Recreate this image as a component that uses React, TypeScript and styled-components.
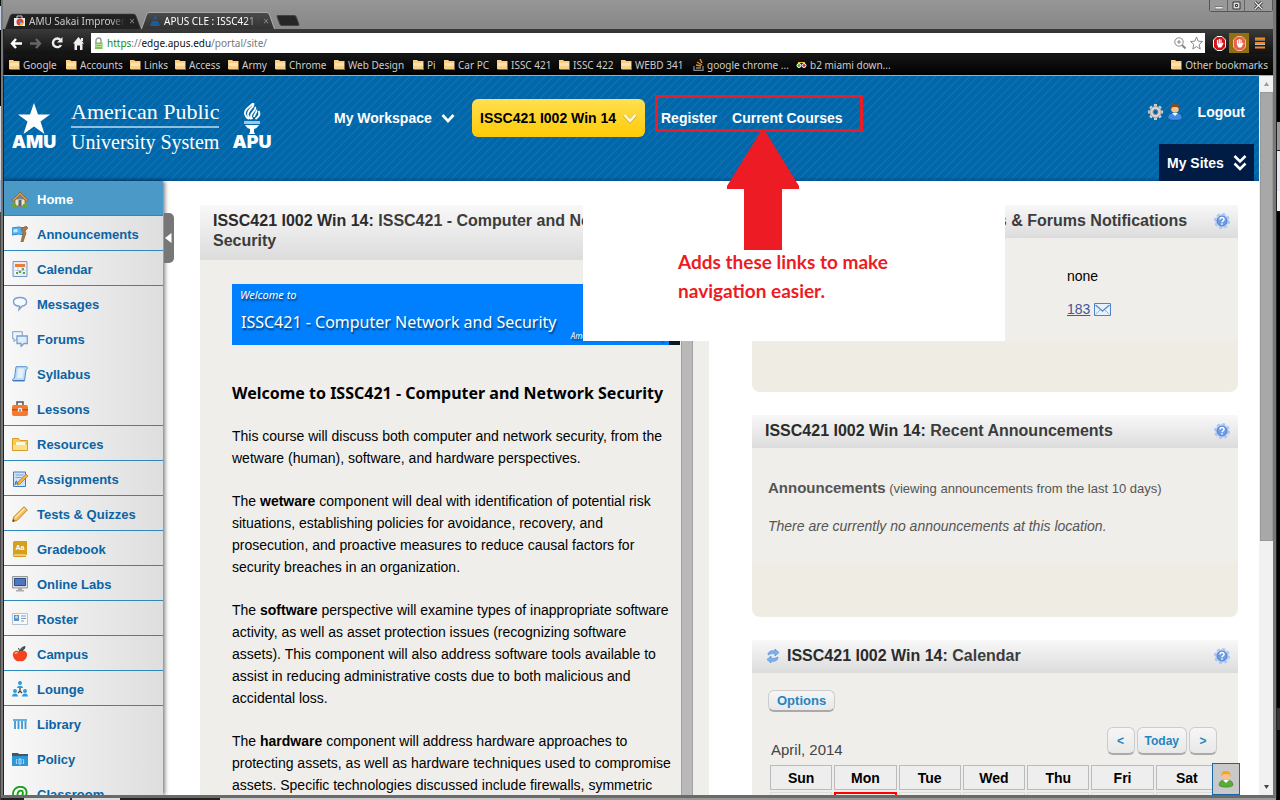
import React from "react";
import styled, { createGlobalStyle } from "styled-components";

const sans = `"Liberation Sans", Arial, sans-serif`;
const ui = `"Noto Sans", Tahoma, sans-serif`;
const serif = `"Liberation Serif", "Times New Roman", serif`;

const GlobalStyle = createGlobalStyle`
  * { box-sizing: border-box; }
  body { margin: 0; font-family: ${sans}; font-size: 14px; color: #000; background: #000; }
  a { color: inherit; text-decoration: none; }
  button { font: inherit; cursor: pointer; margin: 0; }
  p, h1, h2, h3 { margin: 0; }
  svg { display: block; flex: none; }
`;

/* ---------- desktop and browser window ---------- */

const Desktop = styled.div`
  height: 100vh;
  overflow: hidden;
  display: flex;
  padding: 0 4px 2px 1px;
  background:
    linear-gradient(#000 0 122px, #9c9c9c 122px 150px, #222 150px 151px, #e4e6f4 151px 191px, #f4f3f0 191px 211px, #000 211px 708px, #333 708px 730px, #000 730px) right / 4px 100% no-repeat,
    linear-gradient(#111 0 6px, #c8d4e6 6px 30px, #000 30px 106px, #ddd 106px 180px, #9db9dd 180px 212px, #444 212px) left / 1px 100% no-repeat,
    linear-gradient(90deg, #222 0 24px, #ddd 24px 70px, #333 70px 72px, #ddd 72px 120px, #222 120px 220px, #ccc 220px 560px, #999 560px) bottom / 100% 2px no-repeat;
`;

const Window = styled.div`
  flex: 1;
  min-width: 0;
  display: flex;
  flex-direction: column;
  border: solid #777;
  border-width: 0 3px 3px 2px;
  border-bottom-color: #6a6a6a;
  box-shadow: 1px 0 0 #222;
`;

const TitleBar = styled.div`
  height: 29px;
  flex: none;
  display: flex;
  align-items: flex-end;
  padding-left: 2px;
  background: linear-gradient(#969696, #878787);
  font: 10px/16px ${ui};
`;

const Tab = styled.div<{ $active?: boolean; $width: number }>`
  position: relative;
  width: ${p => p.$width}px;
  height: ${p => (p.$active ? 19 : 17)}px;
  padding-top: ${p => (p.$active ? 2 : 0)}px;
  color: ${p => (p.$active ? "#fff" : "#ccc")};
  z-index: ${p => (p.$active ? 1 : 0)};
  &::before {
    content: "";
    position: absolute;
    inset: 0;
    background: ${p => (p.$active ? "linear-gradient(#4a4a4a, #333)" : "#212121")};
    border: 1px solid ${p => (p.$active ? "#aaa" : "#333")};
    border-bottom: 0;
    border-radius: 3px 3px 0 0;
    transform: perspective(40px) rotateX(12deg);
    transform-origin: bottom;
  }
`;

const TabInner = styled.div`
  position: relative;
  display: flex;
  align-items: center;
  gap: 4px;
  height: 17px;
  padding: 0 6px 0 9px;
  white-space: nowrap;
`;

const TabText = styled.span`
  flex: 1;
  overflow: hidden;
  mask-image: linear-gradient(90deg, #000 85%, transparent);
`;

const TabClose = styled.button`
  border: 0;
  padding: 0;
  background: none;
  color: #888;
  font-size: 10px;
`;

const NewTab = styled.button`
  width: 20px;
  height: 11px;
  margin: 0 0 3px 3px;
  padding: 0;
  border: 1px solid #444;
  background: #262626;
  border-radius: 2px;
  transform: skewX(20deg);
`;

const WindowButtons = styled.div`
  align-self: flex-start;
  display: flex;
  margin-left: auto;
  border: 1px solid #555;
  border-top: 0;
  border-radius: 0 0 3px 3px;
`;

const WindowButton = styled.button<{ $wide?: boolean }>`
  display: grid;
  place-items: center;
  width: ${p => (p.$wide ? 28 : 17)}px;
  height: 11px;
  padding: 0;
  border: 0;
  border-left: 1px solid #666;
  background: #999;
  &:first-child { border-left: 0; }
`;

const Toolbar = styled.div`
  height: 25px;
  flex: none;
  display: flex;
  align-items: center;
  padding: 3px 2px 0 2px;
  border-left: 1px solid #222;
  background: linear-gradient(#3a3a3a, #111);
`;

const ToolButton = styled.button<{ $hot?: boolean }>`
  display: grid;
  place-items: center;
  width: 20px;
  height: 20px;
  padding: 0;
  border: 0;
  background: ${p => (p.$hot ? "#93700f" : "none")};
  & + & { margin-right: 1px; }
`;

const AddressBar = styled.div`
  flex: 1;
  display: flex;
  align-items: center;
  gap: 4px;
  height: 20px;
  margin: 0 4px 0 2px;
  padding: 0 2px 0 3px;
  background: #fff;
  font: 10px/20px ${ui};
  color: #777;
`;

const Url = styled.span`
  flex: 1;
  b { font-weight: 400; color: #111; }
  i { font-style: normal; color: #158a15; }
`;

const Bookmarks = styled.nav`
  height: 22px;
  flex: none;
  display: flex;
  align-items: center;
  padding: 0 5px 0 5px;
  border-left: 1px solid #222;
  border-bottom: 1px solid #aaa;
  background: linear-gradient(#161616, #000);
  font: 10px/20px ${ui};
  color: #ccc;
`;

const Bookmark = styled.a<{ $w?: number }>`
  display: flex;
  align-items: center;
  gap: 3px;
  white-space: nowrap;
  flex: none;
  width: ${p => (p.$w ? p.$w + "px" : "auto")};
  margin-left: ${p => (p.$w ? "0" : "auto")};
`;

/* ---------- page ---------- */

const PageFrame = styled.div`
  flex: 1;
  min-height: 0;
  display: flex;
  border-left: 1px solid #222;
  background: #fff;
`;

const Page = styled.div`
  position: relative;
  flex: 1;
  min-width: 0;
  overflow: hidden;
  display: flex;
  flex-direction: column;
`;

const ScrollTrack = styled.div`
  width: 14px;
  flex: none;
  display: flex;
  flex-direction: column;
  align-items: center;
  background: #f1f1f1;
`;

const ScrollThumb = styled.div`
  width: 13px;
  flex: 0 0 62.5%;
  background: #a8a8a8;
  border: 1px solid #989898;
`;

const ScrollEnd = styled.div<{ $bottom?: boolean }>`
  height: 16px;
  flex: none;
  display: grid;
  place-items: center;
  margin-top: ${p => (p.$bottom ? "auto" : "0")};
`;

const Header = styled.header`
  height: 105px;
  flex: none;
  display: flex;
  color: #fff;
  font-weight: 700;
  line-height: 20px;
  white-space: nowrap;
  background:
    linear-gradient(transparent 96%, rgba(0, 40, 90, 0.35)),
    repeating-linear-gradient(135deg, #0067aa 0 4px, #1673b1 5px, #0067aa 6px);
`;

const Brand = styled.a`
  display: flex;
  align-items: center;
  width: 330px;
  height: 100px;
  flex: none;
  padding-left: 8px;
`;

const Emblem = styled.span<{ $w: number }>`
  display: flex;
  flex-direction: column;
  align-items: center;
  width: ${p => p.$w}px;
  font: 900 18px/16px Inter, sans-serif;
`;

const BrandName = styled.span`
  display: flex;
  flex-direction: column;
  margin: 2px 13px 0 15px;
  font: 400 22px/28px ${serif};
  small { border-top: 2px solid #8fc0e0; font-size: 20px; }
`;

const SiteNav = styled.nav`
  display: flex;
  align-items: center;
  height: 38px;
  margin-top: 23px;
`;

const WorkspaceLink = styled.a`
  display: flex;
  align-items: center;
  gap: 9px;
  width: 138px;
`;

const SiteButton = styled.button`
  display: flex;
  align-items: center;
  justify-content: space-between;
  width: 173px;
  height: 38px;
  margin-right: 16px;
  padding: 0 8px;
  border: 0;
  border-radius: 6px;
  color: #000;
  background: linear-gradient(#ffdf52, #ffcb05);
`;

const NavLink = styled.a`
  margin-right: 15px;
`;

const UserTools = styled.div`
  display: flex;
  flex-direction: column;
  align-items: flex-end;
  justify-content: space-between;
  margin-left: auto;
  padding: 26px 5px 0 0;
`;

const UserRow = styled.div`
  display: flex;
  align-items: center;
  padding-right: 9px;
  gap: 3px;
  a { margin-left: 12px; }
`;

const MySites = styled.button`
  display: flex;
  align-items: center;
  justify-content: space-between;
  width: 95px;
  height: 37px;
  padding: 0 7px 0 8px;
  border: 0;
  color: #fff;
  background: #001b44;
`;

const Body = styled.div`
  flex: 1;
  min-height: 0;
  display: flex;
`;

const Sidebar = styled.nav`
  position: relative;
  width: 159px;
  flex: none;
  background: linear-gradient(90deg, #f8f8f8, #dedede);
  box-shadow: 2px 0 4px rgba(0, 0, 0, 0.5);
`;

const SideLink = styled.a<{ $active?: boolean; $line?: boolean }>`
  display: flex;
  align-items: center;
  gap: 9px;
  height: 35px;
  padding: 2px 0 0 8px;
  border-bottom: 1px solid ${p => (p.$line ? "#2e88bd" : "transparent")};
  background: ${p => (p.$active ? "#4b99c6" : "none")};
  color: ${p => (p.$active ? "#fff" : "#0a64a4")};
  font-size: 13px;
  font-weight: 700;
`;

const Collapse = styled.button`
  position: absolute;
  left: 160px;
  top: 32px;
  width: 10px;
  height: 50px;
  padding: 0 0 0 1px;
  border: 0;
  border-radius: 0 5px 5px 0;
  background: #777;
`;

const Columns = styled.main`
  flex: 1;
  min-width: 0;
  display: grid;
  grid-template-columns: minmax(0, 509fr) minmax(0, 486fr);
  gap: 43px;
  align-items: start;
  padding: 24px 21px 0 37px;
`;

const Stack = styled.div`
  display: flex;
  flex-direction: column;
  gap: 23px;
`;

const Panel = styled.section<{ $height?: number }>`
  min-height: ${p => (p.$height ? p.$height + "px" : "auto")};
  background: ${p => (p.$height ? "linear-gradient(#efeeea 72%, #efece4 74%)" : "#efeeea")};
  border-radius: 0 0 8px 8px;
`;

const PanelHead = styled.div`
  display: flex;
  align-items: center;
  gap: 6px;
  padding: 6px 8px 7px 13px;
  color: #3c3c3c;
  background: linear-gradient(#f8f8f8, #dcdcdc);
`;

const PanelTitle = styled.h2`
  flex: 1;
  font-size: 16px;
  line-height: 20px;
  span { color: #2b2b2b; }
`;

const CourseHead = styled(PanelHead)`
  padding: 6px 24px 9px 13px;
`;

const ArticleRow = styled.div`
  display: flex;
  padding: 24px 16px 0 32px;
`;

const Article = styled.article`
  flex: 1;
  min-width: 0;
  line-height: 22px;
  p { margin-bottom: 21px; padding-right: 6px; }
`;

const InnerScroll = styled.div`
  width: 12px;
  flex: none;
  background: #b9b9b9;
  border: solid #a2a2a2;
  border-width: 0 1px;
`;

const Banner = styled.div`
  height: 61px;
  margin: 0 1px 37px 0;
  padding: 0 0 0 8px;
  border-right: 11px solid #0a1620;
  background: #0080ff;
  color: #fff;
  font-family: ${ui};
  text-shadow: 1px 2px 2px rgba(0, 0, 0, 0.6);
  white-space: nowrap;
  overflow: hidden;
`;

const BannerLead = styled.div`
  font-size: 11px;
  font-style: italic;
`;

const BannerTitle = styled.div`
  padding-left: 1px;
  font-size: 16px;
  line-height: 32px;
`;

const BannerFoot = styled.div`
  margin-top: -8px;
  padding-right: 4px;
  text-align: right;
  font-size: 8px;
  font-style: italic;
  line-height: 12px;
`;

const ArticleTitle = styled.h3`
  margin-bottom: 21px;
  font: 700 16px/22px ${ui};
  white-space: nowrap;
`;

const Counts = styled.div`
  display: flex;
  flex-direction: column;
  gap: 11px;
  padding: 27px 0 0 315px;
  line-height: 22px;
  color: #000;
`;

const CountLink = styled.a`
  display: flex;
  align-items: center;
  gap: 4px;
  color: #445599;
  span { text-decoration: underline; }
`;

const Notice = styled.div`
  padding: 30px 16px;
  color: #555;
  font-size: 13px;
  line-height: 20px;
  p + p { margin-top: 17px; }
  b { font-size: 15px; }
  em { font-size: 14px; }
`;

const Calendar = styled.div`
  padding: 17px 18px 0 16px;
`;

const SoftButton = styled.button<{ $tall?: boolean }>`
  height: ${p => (p.$tall ? 28 : 22)}px;
  padding: 0 8px;
  border: 1px solid #ccc;
  border-bottom: 2px solid #aaa;
  border-radius: 6px;
  background: linear-gradient(#f6f6f6, #e8e8e8);
  color: #2484c1;
  font-size: ${p => (p.$tall ? 12 : 13)}px;
  font-weight: 700;
  line-height: 16px;
`;

const CalendarBar = styled.div`
  display: flex;
  align-items: flex-end;
  justify-content: space-between;
  padding: 15px 3px 0;
`;

const Month = styled.h3`
  font-size: 15px;
  line-height: 18px;
  font-weight: 400;
  color: #444;
`;

const Pager = styled.div`
  display: flex;
  gap: 2px;
  padding-bottom: 4px;
  button { padding: 0 7px; }
  button:not(:nth-child(2)) { width: 28px; }
`;

const Days = styled.table`
  width: 100%;
  table-layout: fixed;
  border-collapse: separate;
  border-spacing: 2px;
  margin-top: 4px;
  th {
    height: 25px;
    padding: 0;
    border: 1px solid #bbb;
    background: #eee;
    font-size: 14px;
  }
  td { height: 25px; border: 1px solid #ddd; }
  td.today { border: 2px solid #f00; }
`;

const ChatButton = styled.button`
  position: absolute;
  right: 19px;
  bottom: 0;
  display: grid;
  place-items: center;
  width: 28px;
  height: 32px;
  padding: 0;
  border: 1px solid #1469a4;
  background: #c9c9c9;
`;

/* ---------- annotation drawn over the page ---------- */

const Note = styled.div`
  position: absolute;
  left: 579px;
  top: 105px;
  width: 422px;
  height: 160px;
  padding: 66px 0 0 95px;
  background: #fff;
  color: #ed1c24;
  font: 700 19px/29px Lato, Calibri, sans-serif;
`;

const NoteBox = styled.div`
  position: absolute;
  left: 651px;
  top: 19px;
  width: 208px;
  height: 37px;
  border: 3px solid #ed1c24;
`;

const NoteArrow = styled.svg`
  position: absolute;
  left: 723px;
  top: 55px;
`;

/* ---------- icons ---------- */

const Folder = () => (
  <svg width="11" height="11" viewBox="0 0 11 11"><path d="M0 1h4l1 1h6v9H1L0 9z" fill="#8d6a35" /><path d="M0 1h4l1 1h5v8H0z" fill="#f8cf85" /><path d="M1 4h9v3H1z" fill="#fde2ae" /></svg>
);

const Chevron = ({ double, faint }: { double?: boolean; faint?: boolean }) => (
  <svg width="14" height={double ? 18 : 12} viewBox={double ? "0 0 14 18" : "0 0 14 12"} fill="none" stroke={faint ? "#fff6cf" : "#fff"} strokeWidth="2.6">
    {faint && <path d="M1.500 3.200l5.500 6 5.500-6" stroke="#b59b3c" strokeWidth="3.600" />}
    {double ? <path d="M1.500 2l5.500 5.500L12.500 2M1.500 9.500L7 15l5.500-5.500" /> : <path d="M1.500 3l5.500 6 5.500-6" />}
  </svg>
);

const Help = () => (
  <svg width="16" height="16" viewBox="0 0 16 16"><circle cx="8" cy="8" r="7" fill="#c4d8f7" stroke="#a9c6f1" strokeWidth="2" strokeDasharray="3 2.500" /><circle cx="8" cy="8" r="5" fill="#6f9be3" stroke="#4f7fd0" /><path d="M6 6.500c0-2.600 4-2.600 4 0 0 1.500-2 1.400-2 2.800M8 10.300v1.400" stroke="#fff" strokeWidth="1.500" fill="none" /></svg>
);

const Person = ({ hair, body }: { hair: string; body: string }) => (
  <svg width="16" height="18" viewBox="0 0 16 18"><path d="M1 15c0-4 3-5 7-5s7 1 7 5c0 3-14 3-14 0z" fill={body} stroke="#0003" /><path d="M5 10l3 3 3-3z" fill="#fff" /><circle cx="8" cy="6" r="3.800" fill="#f6c48e" /><path d="M3.500 7C3 2 5 1 8 1s5 1 4.500 6c-1-3-2-3-4.500-3S4.500 4 3.500 7z" fill={hair} /></svg>
);

const Gear = () => (
  <svg width="17" height="18" viewBox="0 0 17 18"><g stroke="#ccc" strokeWidth="3"><path d="M8.500 1v16M1 9h15M3.200 3.500l10.600 11M13.800 3.500l-10.600 11" /></g><circle cx="8.500" cy="9" r="5.500" fill="#d6d6d6" stroke="#aaa" /><circle cx="8.500" cy="9" r="2.500" fill="#0b62a0" stroke="#888" /></svg>
);

const Mail = () => (
  <svg width="17" height="13" viewBox="0 0 17 13"><path d="M.5.5h16v12H.5z" fill="#e8f2fd" stroke="#4d84c9" /><path d="M1.500 11.500l5-5M15.500 11.500l-5-5" stroke="#8cb4e6" /><path d="M1.500 2l7 6 7-6" fill="none" stroke="#5c8fd0" strokeWidth="1.400" /></svg>
);

const glyphs: Record<string, React.ReactNode> = {
  Home: <><path d="M3 8h10v7H3z" fill="#f1e4cd" stroke="#a97b46" /><path d="M0 9l8-8 8 8-1.500 1.500L8 4.200l-6.500 6.300z" fill="#cf9651" stroke="#8a5a26" strokeWidth=".7" /><path d="M6.500 9h3v6h-3z" fill="#5d6670" /><path d="M0 13h4l1 3H0zM11 13h5v3h-5z" fill="#6ba53a" /></>,
  Announcements: <><path d="M0 2l7-1 5 1v7l-5-1-7 1z" fill="#58b4f0" stroke="#3287cc" /><path d="M1.500 3.500l4-.6v3l-4 .6z" fill="#c8e9fd" /><path d="M9 3l5-3 2 2-3 3 1 2-3 9H9l2-9z" fill="#a87944" stroke="#76502a" strokeWidth=".6" /></>,
  Calendar: <><path d="M1 .5h14v15H1z" fill="#e6edf7" stroke="#7298c6" /><path d="M3 3h10v3H3z" fill="#ee7a3c" /><path d="M3 6.500h10V13H3z" fill="#fff" /><path d="M3 9.500h10M6 6.500V13M10 6.500V13" stroke="#b9c6d8" /><path d="M4 11h2v2H4zM7 10h2v2H7zM10 7h2v2h-2zM11 11h2v2h-2z" fill="#5ea63d" /></>,
  Messages: <path d="M8 1.500c4 0 6.500 1.700 6.500 4.300 0 3-2.500 4.200-4.500 4.400L7 13.500l.5-3.300C4 10 1.500 8.500 1.500 5.800 1.500 3 4 1.500 8 1.500z" fill="#f5faff" stroke="#7b9fcb" strokeWidth="1.400" />,
  Forums: <><path d="M.7.700h9.600v7H5l-3 3V7.700H.7z" fill="#eef5fd" stroke="#7b9fcb" /><path d="M5 5h10.300v7.500H12l-3 3v-3H5z" fill="#e0edfb" stroke="#7b9fcb" strokeWidth="1.300" /></>,
  Syllabus: <><path d="M4 .7h10.500c1.500 0 1 3-.5 3L12.500 15H1.500C-.5 15 1 12 2.500 12z" fill="#bcdcf8" stroke="#568fce" /><path d="M6 2.500h6L10.500 12H5z" fill="#e3f1fd" /><path d="M1 14.500h11" stroke="#3c78b8" /></>,
  Lessons: <><path d="M5 4V1h6v3" fill="none" stroke="#555" strokeWidth="1.500" /><rect y="4" width="16" height="11" rx="2" fill="#f47a31" /><path d="M0 8h16v1.500H0z" fill="#c9501a" /><circle cx="8" cy="9" r="2.300" fill="#eee" /><path d="M7.500 8h1v3h-1z" fill="#555" /></>,
  Resources: <><path d="M.5 2.500h6l1.500 2h7.500v10H.5z" fill="#f5cc51" stroke="#d99a2a" /><path d="M4 6h9v4H4z" fill="#fff8dc" /><path d="M1 9h14v5H1z" fill="#fbe08a" /></>,
  Assignments: <><path d="M1.500 1h12v14.500h-12z" fill="#cfe2f8" stroke="#3f7cc3" /><path d="M3.500 4h8M3.500 6.500h6" stroke="#7da5d6" /><path d="M14 3l2 2-8 8-3 1 1-3z" fill="#f3b13d" stroke="#b37b1f" strokeWidth=".7" /><path d="M3 14c1-5 2-5 2-1" stroke="#235ea8" fill="none" /></>,
  "Tests & Quizzes": <><path d="M12 .7l3.300 3.300L5 14.500.7 15.500 1.700 11z" fill="#f8bf58" stroke="#c1832b" /><path d="M3 12L12.500 2.500" stroke="#fde6ae" strokeWidth="1.500" /><path d="M1 13l2 2-2.500.7z" fill="#444" /></>,
  Gradebook: <><path d="M1 1.500C1 .5 2 0 3 0h12v14h-1v2H3c-1 0-2-.5-2-1.500z" fill="#d6a01c" /><path d="M2 14h12" stroke="#fff2c4" /><text x="3.500" y="9" fontSize="7" fontWeight="700" fill="#fff" fontFamily="Liberation Sans, sans-serif">Aa</text></>,
  "Online Labs": <><path d="M.5.5h15v11.500H.5z" fill="#d8d8d8" stroke="#999" /><path d="M2.500 2.500h11v7h-11z" fill="#4e77c0" stroke="#2c4e8c" /><path d="M6 12h4v2h2v1.500H4V14h2z" fill="#aaa" /></>,
  Roster: <><path d="M.5 2.500h15v11H.5z" fill="#f6f8fa" stroke="#b8c3cd" /><path d="M2 4h5v6H2z" fill="#4c94d8" /><circle cx="4.500" cy="6" r="1.500" fill="#f5cda0" /><path d="M9 5h5M9 7.500h5M9 10h3" stroke="#7e9cbd" /></>,
  Campus: <><path d="M8 6C4 3 0 6 1 10s4 6 7 5c3 1 6-1 7-5s-3-7-7-4z" fill="#f4431c" /><path d="M8 5c0-2 2-4 5-4.500C13 3 11 5 8 5zM8 6L6.500 2" fill="#555" stroke="#444" /><path d="M3 8c.5-1 1.500-1.500 2.500-1.500" stroke="#ffb08f" fill="none" strokeWidth="1.400" /></>,
  Lounge: <><g fill="#2e9bdb"><circle cx="8" cy="2" r="2" /><path d="M5 7c0-3 6-3 6 0z" /><circle cx="3" cy="10" r="2" /><path d="M0 15.500c0-4 6-4 6 0zM10 15.500c0-4 6-4 6 0z" /><circle cx="13" cy="10" r="2" /></g><path d="M8 7v3M8 10l-2 2M8 10l2 2" stroke="#444" strokeWidth="1.300" /></>,
  Library: <><path d="M1 3h14v2H1z" fill="#5cb3e4" /><path d="M3 5v8M6.500 5v8M10 5v8M13.500 5v8" stroke="#3f98cf" strokeWidth="1.800" /></>,
  Policy: <><path d="M0 2h6l1 1h9v4H0z" fill="#4a5560" /><path d="M0 5h16v10H0z" fill="#2b97d6" /><path d="M5 8c-1 2-1 4 0 5M11 8c1 2 1 4 0 5M7 8h2v5H7z" fill="none" stroke="#bfe4fa" /></>,
  Classroom: <path d="M11 5.500c-3-2-5.500 0-5.500 3S9 12 10.500 9L11 5.500c-.5 3-.5 5 1 5s3-1.500 2.500-5C14 2 11 .8 8 .8 4 .8 1 4 1 8s3 7.200 7 7.200c2 0 3.500-.5 5-1.500" fill="none" stroke="#16a016" strokeWidth="1.800" />,
};

const sideItems: [string, boolean][] = [
  ["Home", true], ["Announcements", true], ["Calendar", true], ["Messages", false], ["Forums", false],
  ["Syllabus", false], ["Lessons", true], ["Resources", true], ["Assignments", true], ["Tests & Quizzes", true],
  ["Gradebook", true], ["Online Labs", true], ["Roster", true], ["Campus", true], ["Lounge", true],
  ["Library", false], ["Policy", false], ["Classroom", false],
];

const bookmarks: [string, number][] = [
  ["Google", 57], ["Accounts", 64], ["Links", 45], ["Access", 53], ["Army", 47], ["Chrome", 59], ["Web Design", 79],
  ["Pi", 31], ["Car PC", 53], ["ISSC 421", 62], ["ISSC 422", 62], ["WEBD 341", 72],
];

const dayNames = ["Sun", "Mon", "Tue", "Wed", "Thu", "Fri", "Sat"];

const Hand = ({ pale }: { pale?: boolean }) => (
  <svg width="13" height="15" viewBox="0 0 13 15"><path d="M4 .5h5l3.500 3.500v7L9 14.500H4L.5 11V4z" fill={pale ? "#e8604a" : "#d3121a"} stroke={pale ? "#f5b9a0" : "#fff"} /><path d="M4.500 4v5M6.300 3v6M8 3.500V9" stroke="#fff" strokeWidth="1.200" /><path d="M3.900 7.500h4.700L10 6.500l.5.700L8.300 11.500H5.200z" fill="#fff" /></svg>
);

export default function App() {
  return (
    <>
      <GlobalStyle />
      <Desktop>
        <Window>
          <TitleBar>
            <Tab $width={136}>
              <TabInner>
                <svg width="11" height="11" viewBox="0 0 11 11"><path d="M0 3h11v8H0z" fill="#eee" /><path d="M3 3V1h5v2" stroke="#ccc" fill="none" /><circle cx="6" cy="7" r="3.500" fill="#e33b2e" /><path d="M6 7l3.500 1A3.500 3.500 0 016 10.500z" fill="#f3c11b" /><circle cx="6" cy="7" r="1.400" fill="#4b87e0" /></svg>
                <TabText>AMU Sakai Improver</TabText>
                <TabClose aria-label="Close tab">×</TabClose>
              </TabInner>
            </Tab>
            <Tab $active $width={134}>
              <TabInner>
                <svg width="10" height="11" viewBox="0 0 10 11"><path d="M5 0l2 4-4 1zM2 6h6l2 5H0z" fill="#1d5aa0" /></svg>
                <TabText>APUS CLE : ISSC421 I</TabText>
                <TabClose aria-label="Close tab">×</TabClose>
              </TabInner>
            </Tab>
            <NewTab aria-label="New tab" />
            <WindowButtons>
              <WindowButton aria-label="Minimize"><svg width="8" height="8"><path d="M0 4.500h8V7H0z" fill="#eee" stroke="#444" strokeWidth=".6" /></svg></WindowButton>
              <WindowButton aria-label="Restore"><svg width="9" height="9"><path d="M1 1h7v7H1zM3.500 3.500h2v2h-2z" fill="#ddd" stroke="#333" /></svg></WindowButton>
              <WindowButton $wide aria-label="Close"><svg width="9" height="9"><path d="M1 1l7 7M8 1L1 8" stroke="#333" strokeWidth="3" /><path d="M1 1l7 7M8 1L1 8" stroke="#eee" strokeWidth="1.200" /></svg></WindowButton>
            </WindowButtons>
          </TitleBar>
          <Toolbar>
            <ToolButton aria-label="Back"><svg width="12" height="11"><path d="M6 1L2 5.500 6 10M2 5.500h10" stroke="#fff" strokeWidth="2.400" fill="none" /></svg></ToolButton>
            <ToolButton aria-label="Forward"><svg width="12" height="11"><path d="M6 1l4 4.500L6 10M0 5.500h10" stroke="#666" strokeWidth="2.400" fill="none" /></svg></ToolButton>
            <ToolButton aria-label="Reload"><svg width="12" height="12"><path d="M9.500 3A4.300 4.300 0 1010 8" stroke="#eee" strokeWidth="2.400" fill="none" /><path d="M11.500 0v5.500H6z" fill="#eee" /></svg></ToolButton>
            <ToolButton aria-label="Home page"><svg width="11" height="13"><path d="M5.500 0L11 6.500H9.500V13H7V8.500H4V13H1.500V6.500H0z" fill="#eee" /><path d="M8 1h2v3H8z" fill="#eee" /></svg></ToolButton>
            <AddressBar role="textbox" aria-label="Address">
              <svg width="9" height="13"><path d="M2 6V3.500a2.500 2.500 0 015 0V6" stroke="#999" strokeWidth="1.400" fill="none" /><path d="M1 5.500h7.500V12H1z" fill="#7cc255" /><path d="M1 7.500h7.500M1 9.500h7.500" stroke="#b5e09a" /></svg>
              <Url><i>https</i>://<b>edge.apus.edu</b>/portal/site/</Url>
              <svg width="12" height="12" fill="none" stroke="#888"><circle cx="5" cy="5" r="4.200" /><path d="M8 8l3.500 3.500" strokeWidth="2" /><path d="M3 5h4M5 3v4" /></svg>
              <svg width="13" height="14" viewBox="0 0 13 14"><path d="M6.500 1l1.700 4.200 4.300.3-3.300 3 1 4.500-3.700-2.400L2.800 13l1-4.500-3.300-3 4.300-.3z" fill="#fff" stroke="#888" /></svg>
            </AddressBar>
            <ToolButton aria-label="Ad blocker"><Hand /></ToolButton>
            <ToolButton $hot aria-label="Page blocker"><Hand pale /></ToolButton>
            <ToolButton aria-label="Menu"><svg width="10" height="12"><path d="M0 1.500h10M0 6h10M0 10.500h10" stroke="#f08a24" strokeWidth="2" /><path d="M0 3h10M0 7.500h10" stroke="#bbb" /></svg></ToolButton>
          </Toolbar>
          <Bookmarks aria-label="Bookmarks">
            {bookmarks.map(([name, w]) => (
              <Bookmark key={name} href="#" $w={w}><Folder />{name}</Bookmark>
            ))}
            <Bookmark href="#" $w={103}>
              <svg width="11" height="13"><path d="M1 8v4.500h9V8M3 10h5" stroke="#888" fill="none" strokeWidth="1.300" /><path d="M3 7l5 1M4 4l5 3M7 1l2 4" stroke="#f08a24" strokeWidth="1.400" /></svg>
              google chrome ...
            </Bookmark>
            <Bookmark href="#" $w={96}>
              <svg width="11" height="8"><circle cx="3" cy="4.500" r="2" fill="#5a2" stroke="#fff" /><circle cx="8" cy="4.500" r="2" fill="#c33" stroke="#fff" /><path d="M2 1.500h7" stroke="#e4c33a" /></svg>
              b2 miami down...
            </Bookmark>
            <Bookmark href="#"><Folder />Other bookmarks</Bookmark>
          </Bookmarks>

          <PageFrame>
            <Page>
              <Header>
                <Brand href="#" aria-label="American Public University System">
                  <Emblem $w={44}>
                    <svg width="32" height="31" viewBox="0 0 32 31"><path d="M16 0l4 11.500h12L22.500 18.500 26.500 31 16 23.500 5.500 31 9.500 18.500 0 11.500h12z" fill="#fff" /></svg>
                    AMU
                  </Emblem>
                  <BrandName>American Public<small>University System</small></BrandName>
                  <Emblem $w={39}>
                    <svg width="18" height="31" viewBox="0 0 18 31" fill="none" stroke="#fff"><path d="M10 0c-2 4-9 5-8 11 .5 2 2 4 4 5M10 0c3 4-6 6-5 12 .5 2 1.500 3 3 4M12 4c2 3-4 5-4 9 0 1 .5 2 1.500 3M13 7c2 2-2 4-2 7M15.500 8c2 3 0 6-3 8" strokeWidth="1.800" /><path d="M1 18h16v3H1z" fill="#9cc8e6" stroke="none" /><path d="M2 22h14l-2.500 3-2.500 1v3l1 2H6l1-2v-3l-2.500-1z" fill="#fff" stroke="none" /></svg>
                    APU
                  </Emblem>
                </Brand>
                <SiteNav aria-label="Sites">
                  <WorkspaceLink href="#">My Workspace <Chevron /></WorkspaceLink>
                  <SiteButton>ISSC421 I002 Win 14 <Chevron faint /></SiteButton>
                  <NavLink href="#">Register</NavLink>
                  <NavLink href="#">Current Courses</NavLink>
                </SiteNav>
                <UserTools>
                  <UserRow><Gear /><Person hair="#8a4a20" body="#3f8be6" /><a href="#">Logout</a></UserRow>
                  <MySites>My Sites <Chevron double /></MySites>
                </UserTools>
              </Header>

              <Body>
                <Sidebar aria-label="Course tools">
                  {sideItems.map(([name, line], i) => (
                    <SideLink key={name} href="#" $line={line} $active={i === 0}>
                      <svg width="16" height="16" viewBox="0 0 16 16">{glyphs[name]}</svg>
                      {name}
                    </SideLink>
                  ))}
                  <Collapse aria-label="Collapse menu"><svg width="7" height="10"><path d="M6.500 0v10L0 5z" fill="#fff" /></svg></Collapse>
                </Sidebar>

                <Columns>
                  <Panel>
                    <CourseHead>
                      <PanelTitle><span>ISSC421 I002 Win 14:</span> ISSC421 - Computer and Network Security</PanelTitle>
                    </CourseHead>
                    <ArticleRow>
                      <Article>
                        <Banner>
                          <BannerLead>Welcome to</BannerLead>
                          <BannerTitle>ISSC421 - Computer Network and Security</BannerTitle>
                          <BannerFoot>American Public University</BannerFoot>
                        </Banner>
                        <ArticleTitle>Welcome to ISSC421 - Computer and Network Security</ArticleTitle>
                        <p>This course will discuss both computer and network security, from the wetware (human), software, and hardware perspectives.</p>
                        <p>The <b>wetware</b> component will deal with identification of potential risk situations, establishing policies for avoidance, recovery, and prosecution, and proactive measures to reduce causal factors for security breaches in an organization.</p>
                        <p>The <b>software</b> perspective will examine types of inappropriate software activity, as well as asset protection issues (recognizing software assets). This component will also address software tools available to assist in reducing administrative costs due to both malicious and accidental loss.</p>
                        <p>The <b>hardware</b> component will address hardware approaches to protecting assets, as well as hardware techniques used to compromise assets. Specific technologies discussed include firewalls, symmetric</p>
                      </Article>
                      <InnerScroll />
                    </ArticleRow>
                  </Panel>

                  <Stack>
                    <Panel $height={187}>
                      <PanelHead>
                        <PanelTitle><span>ISSC421 I002 Win 14:</span> Messages &amp; Forums Notifications</PanelTitle>
                        <Help />
                      </PanelHead>
                      <Counts>
                        <span>none</span>
                        <CountLink href="#"><span>183</span><Mail /></CountLink>
                      </Counts>
                    </Panel>

                    <Panel $height={202}>
                      <PanelHead>
                        <PanelTitle><span>ISSC421 I002 Win 14:</span> Recent Announcements</PanelTitle>
                        <Help />
                      </PanelHead>
                      <Notice>
                        <p><b>Announcements</b> (viewing announcements from the last 10 days)</p>
                        <p><em>There are currently no announcements at this location.</em></p>
                      </Notice>
                    </Panel>

                    <Panel>
                      <PanelHead>
                        <svg width="16" height="16" viewBox="0 0 16 16"><path d="M3 7c0-4 4-5 7-4V1l4 3.500L10 8V6c-3-1-5 0-7 1zM13 9c0 4-4 5-7 4v2l-4-3.500L6 8v2c3 1 5 0 7-1z" fill="#7fb2ec" stroke="#4a86cf" strokeWidth=".6" /></svg>
                        <PanelTitle><span>ISSC421 I002 Win 14:</span> Calendar</PanelTitle>
                        <Help />
                      </PanelHead>
                      <Calendar>
                        <SoftButton>Options</SoftButton>
                        <CalendarBar>
                          <Month>April, 2014</Month>
                          <Pager>
                            <SoftButton $tall aria-label="Previous month">&lt;</SoftButton>
                            <SoftButton $tall>Today</SoftButton>
                            <SoftButton $tall aria-label="Next month">&gt;</SoftButton>
                          </Pager>
                        </CalendarBar>
                        <Days>
                          <thead><tr>{dayNames.map(d => <th key={d} scope="col">{d}</th>)}</tr></thead>
                          <tbody><tr>{dayNames.map(d => <td key={d} className={d === "Mon" ? "today" : undefined} />)}</tr></tbody>
                        </Days>
                      </Calendar>
                    </Panel>
                  </Stack>
                </Columns>
              </Body>

              <Note>Adds these links to make<br />navigation easier.</Note>
              <NoteBox />
              <NoteArrow width="72" height="119" viewBox="0 0 72 119"><path d="M34 0h4L72 55v3H55v61H17V58H0v-3z" fill="#ed1c24" /></NoteArrow>
              <ChatButton aria-label="Chat"><Person hair="#f5a41c" body="#58ad35" /></ChatButton>
            </Page>
            <ScrollTrack>
              <ScrollEnd><svg width="5" height="4"><path d="M2.500 0L5 4H0z" fill="#999" /></svg></ScrollEnd>
              <ScrollThumb />
              <ScrollEnd $bottom><svg width="5" height="4"><path d="M0 0h5L2.500 4z" fill="#444" /></svg></ScrollEnd>
            </ScrollTrack>
          </PageFrame>
        </Window>
      </Desktop>
    </>
  );
}
